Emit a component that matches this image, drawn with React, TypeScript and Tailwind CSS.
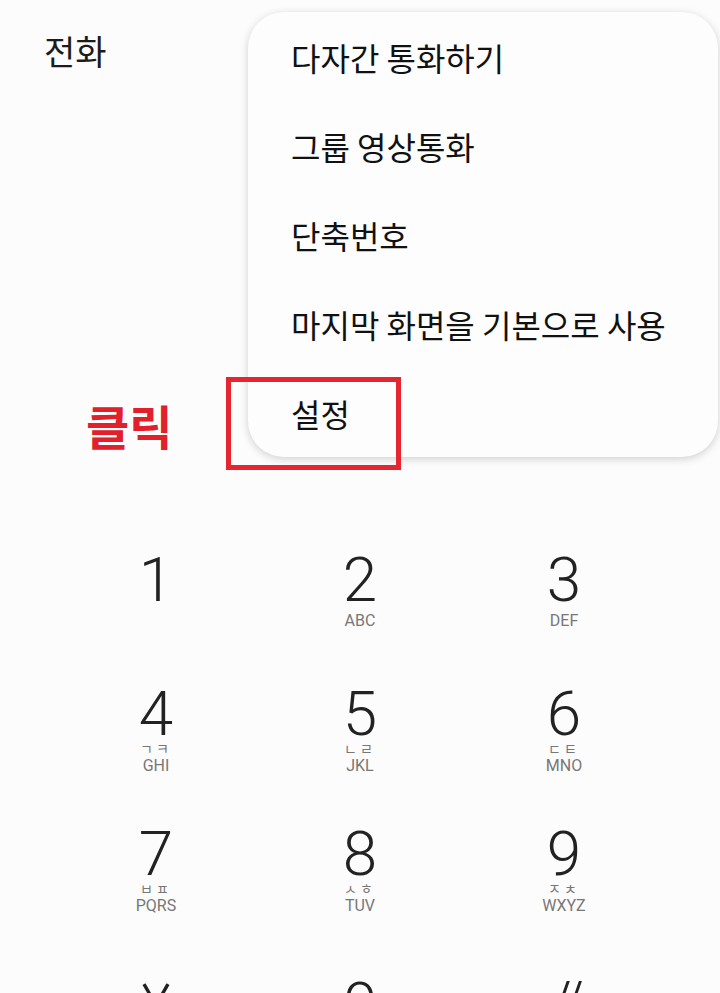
const KR = "font-['Noto_Sans_CJK_KR','Noto_Sans',sans-serif]"
const NUM = "font-['Roboto','Liberation_Sans',sans-serif]"

type Key = {
  digit: string
  jamo?: string
  letters?: string
}

const rows: Key[][] = [
  [{ digit: "1" }, { digit: "2", letters: "ABC" }, { digit: "3", letters: "DEF" }],
  [
    { digit: "4", jamo: "ㄱㅋ", letters: "GHI" },
    { digit: "5", jamo: "ㄴㄹ", letters: "JKL" },
    { digit: "6", jamo: "ㄷㅌ", letters: "MNO" },
  ],
  [
    { digit: "7", jamo: "ㅂㅍ", letters: "PQRS" },
    { digit: "8", jamo: "ㅅㅎ", letters: "TUV" },
    { digit: "9", jamo: "ㅈㅊ", letters: "WXYZ" },
  ],
]

const menuItems = ["다자간 통화하기", "그룹 영상통화", "단축번호", "마지막 화면을 기본으로 사용", "설정"]

function Asterisk() {
  return (
    <svg width="44" height="44" viewBox="0 0 44 44" className="text-[#222]">
      <g stroke="currentColor" strokeWidth="3.4" strokeLinecap="butt">
        <line x1="22" y1="22" x2="34" y2="1.2" />
        <line x1="22" y1="22" x2="10" y2="1.2" />
        <line x1="22" y1="22" x2="10" y2="42.8" />
        <line x1="22" y1="22" x2="34" y2="42.8" />
        <line x1="0" y1="22" x2="44" y2="22" />
      </g>
    </svg>
  )
}

function KeyCell({ k, hasJamoRow }: { k: Key; hasJamoRow: boolean }) {
  return (
    <div className="flex h-[140px] flex-col items-center justify-center">
      <div className={`${NUM} h-[44px] text-[62px] font-light leading-[44px] text-[#222]`}>{k.digit}</div>
      {hasJamoRow && (
        <div className={`${KR} mt-[7px] h-[10px] text-[14px] leading-[10px] tracking-[3px] text-[#777]`}>
          {k.jamo}
        </div>
      )}
      <div
        className={`${NUM} h-[13px] text-[16px] leading-[13px] text-[#777] ${hasJamoRow ? "mt-[6px]" : "mt-[12px]"}`}
      >
        {k.letters}
      </div>
    </div>
  )
}

export default function App() {
  return (
    <div className="relative h-[993px] w-[720px] overflow-hidden bg-[#fcfcfc]">
      {/* header */}
      <div className="h-[522px] px-[44px] pt-[29px]">
        <h1 className={`${KR} text-[34px] font-normal leading-[44px] text-[#1c1c1c]`}>전화</h1>
      </div>

      {/* dial pad */}
      <div className="mx-auto grid w-[612px] grid-cols-3">
        {rows.map((row, i) =>
          row.map((k) => <KeyCell key={k.digit} k={k} hasJamoRow={i > 0} />)
        )}
        <div className="flex h-[140px] flex-col items-center justify-center">
          <div className="flex h-[44px] items-center">
            <Asterisk />
          </div>
          <div className="h-[14px]" />
        </div>
        <div className="flex h-[140px] flex-col items-center justify-center">
          <div className={`${NUM} h-[44px] text-[62px] font-light leading-[44px] text-[#222]`}>0</div>
          <div className="h-[14px]" />
        </div>
        <div className="flex h-[140px] flex-col items-center justify-center">
          <div className={`${NUM} h-[44px] text-[62px] font-light italic leading-[44px] text-[#222]`}>#</div>
          <div className="h-[14px]" />
        </div>
      </div>

      {/* popup menu */}
      <div className="absolute left-[248px] top-[12px] w-[470px] rounded-[36px] bg-[#fdfdfd] shadow-[0_2px_8px_rgba(0,0,0,0.18)]">
        {menuItems.map((item) => (
          <div key={item} className={`${KR} flex h-[89px] items-center pl-[43px] text-[32px] text-[#111]`}>
            {item}
          </div>
        ))}
      </div>

      {/* annotation */}
      <div className="absolute left-[226px] top-[377px] h-[93px] w-[175px] border-[5px] border-[#e52530]" />
      <div className={`${KR} absolute left-[86px] top-[400px] text-[47px] font-bold leading-[50px] text-[#e2202b]`}>
        클릭
      </div>
    </div>
  )
}
